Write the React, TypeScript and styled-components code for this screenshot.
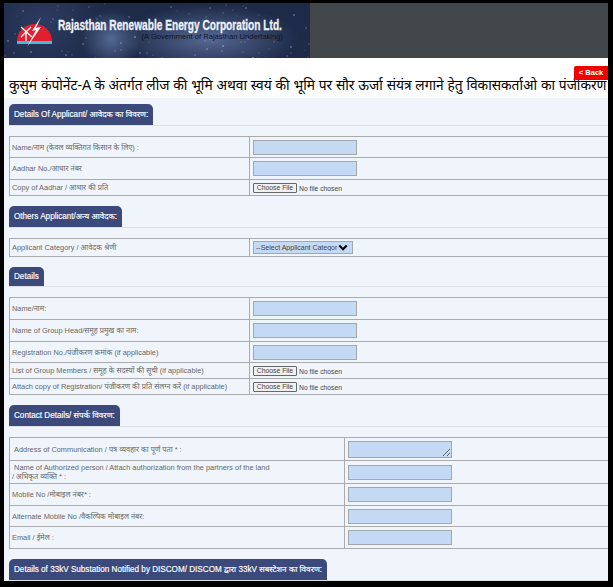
import React from 'react'
import styled, { createGlobalStyle } from 'styled-components'

const GlobalStyle = createGlobalStyle`
  html, body {
    margin: 0;
    padding: 0;
    height: 100%;
    background: #000;
    overflow: hidden;
  }
`

const seeded = (seed: number) => () => {
  seed = (seed * 16807) % 2147483647
  return seed / 2147483647
}

const rand = seeded(4211)
const stars = Array.from({ length: 110 }, () => {
  const x = Math.round(rand() * 306)
  const y = Math.round(rand() * 55)
  const r = (0.5 + rand() * 1).toFixed(1)
  const a = (0.2 + rand() * 0.45).toFixed(2)
  return `radial-gradient(circle ${r}px at ${x}px ${y}px, rgba(205,220,240,${a}), transparent)`
}).join(',')

const chevron =
  "data:image/svg+xml,%3Csvg xmlns='http://www.w3.org/2000/svg' viewBox='0 0 12 8'%3E%3Cpath d='M1.5 1.5L6 6l4.5-4.5' fill='none' stroke='%23000' stroke-width='2.6'/%3E%3C/svg%3E"

const Frame = styled.div`
  width: 604px;
  height: 578px;
  margin: 3px 0 0 4px;
  overflow: hidden;
  position: relative;
  background: #f0f5fc;
  font-family: 'Liberation Sans', Arial, 'Noto Sans', sans-serif;
`

const Header = styled.header`
  height: 55px;
  background: #41464b;
`

const Banner = styled.div`
  width: 306px;
  height: 55px;
  display: flex;
  align-items: flex-start;
  box-sizing: border-box;
  padding: 13px 0 0 11px;
  background: ${stars},
    radial-gradient(circle 30px at 107px 36px, rgba(120, 146, 200, 0.6), transparent),
    radial-gradient(ellipse 90px 34px at 205px 36px, rgba(96, 114, 160, 0.85), transparent),
    radial-gradient(circle 60px at 40px 20px, rgba(60, 76, 120, 0.5), transparent),
    #1d2a48;
`

const LogoMark = styled.svg`
  width: 40px;
  height: 32px;
  flex: none;
`

const BannerText = styled.div`
  width: 225px;
  margin-left: 3px;
  margin-top: 2px;
  display: flex;
  flex-direction: column;
  align-items: flex-end;
`

const BannerTitle = styled.div`
  width: 100%;
  color: #eef1f8;
  font-weight: 700;
  font-size: 14px;
  line-height: 14px;
  white-space: nowrap;
  transform: scaleX(0.725);
  transform-origin: left center;
  -webkit-text-stroke: 0.3px #eef1f8;
`

const BannerSub = styled.div`
  color: #10131f;
  font-size: 7.6px;
  line-height: 9px;
  margin-top: 0;
  white-space: nowrap;
`

const TitleBand = styled.div`
  height: 40px;
  background: #fff;
  padding: 15px 0 0 5px;
  box-sizing: border-box;
`

const PageTitle = styled.h1`
  margin: 0;
  font-size: 13.75px;
  line-height: 26px;
  font-weight: 400;
  color: #000;
  white-space: nowrap;
`

const BackButton = styled.a`
  position: absolute;
  top: 63px;
  right: 0;
  width: 34px;
  height: 14px;
  background: #f00000;
  color: #fff;
  font-size: 7.6px;
  font-weight: 700;
  line-height: 14px;
  text-align: center;
  border-radius: 2px 0 0 2px;
`

const Section = styled.section<{ $top?: number }>`
  padding: ${p => p.$top ?? 10}px 0 0 5px;
`

const TabLine = styled.div`
  border-bottom: 1px solid #dde1e6;
  margin-bottom: 10px;
`

const Tab = styled.h2<{ $h?: number }>`
  display: inline-block;
  vertical-align: bottom;
  margin: 0;
  padding: 0 5px;
  height: ${p => p.$h ?? 21}px;
  line-height: ${p => p.$h ?? 21}px;
  background: #3b4a7a;
  color: #fff;
  font-size: 8.15px;
  font-weight: 400;
  -webkit-text-stroke: 0.15px #fff;
  border-radius: 5px 5px 0 0;
  white-space: nowrap;
`

const FormTable = styled.table`
  width: 599px;
  table-layout: fixed;
  border-collapse: collapse;
  border: 1px solid #a9abad;
  border-right: 0;
`

const Row = styled.tr<{ $h: number }>`
  height: ${p => p.$h}px;
`

const LabelCell = styled.td<{ $w: number; $indent?: number }>`
  width: ${p => p.$w}px;
  border: 1px solid #a9abad;
  padding: 0 0 0 ${p => p.$indent ?? 2}px;
  font-size: 7.4px;
  line-height: 9px;
  color: #666;
`

const FieldCell = styled.td`
  border: 1px solid #a9abad;
  border-right: 0;
  padding: 0 0 0 3px;
  font-size: 0;
`

const TextBox = styled.input`
  display: block;
  width: 104px;
  height: 15px;
  box-sizing: border-box;
  padding: 0;
  background: #c4d9f3;
  border: 1px solid #a4a8ad;
`

const TextArea = styled.textarea`
  display: block;
  width: 104px;
  height: 17px;
  box-sizing: border-box;
  padding: 0;
  margin: 0;
  background: #c4d9f3;
  border: 1px solid #a4a8ad;
`

const FileBox = styled.input`
  display: block;
  width: 150px;
  height: 10px;
  font-size: 6.8px;
  line-height: 10px;
  font-family: 'Liberation Sans', sans-serif;
  color: #444;

  &::file-selector-button {
    font-size: 6.8px;
    width: 44px;
    height: 10px;
    padding: 0;
    margin-right: 2px;
    background: #f0f0f0;
    border: 1px solid #666;
    border-radius: 1px;
    color: #444;
    font-family: 'Liberation Sans', sans-serif;
  }
`

const SelectBox = styled.select`
  display: block;
  width: 100px;
  height: 13px;
  padding: 0 15px 0 2px;
  appearance: none;
  background: #c4d9f3 url("${chevron}") no-repeat right 4px center / 10px 7px;
  border: 1px solid #a4a8ad;
  font-size: 7px;
  font-family: 'Liberation Sans', sans-serif;
  color: #444;
`

const LogoIcon = () => (
  <LogoMark viewBox="0 0 40 32">
    <path d="M2 25a17.5 17 0 0 1 35 0z" fill="#e21f2e" />
    <rect x="2" y="25" width="35" height="3" fill="#4fb4d8" />
    <g stroke="#fff" strokeWidth="1.3" fill="none">
      <path d="M6 11l11 10M16 11L6 21M11 16v9" />
    </g>
    <path d="M26 1L17 15l4-1-9 17 14-20-5 1z" fill="#fff" />
  </LogoMark>
)

const Details = ({ rows, w }: { rows: [React.ReactNode, React.ReactNode, number, number?][]; w: number }) => (
  <FormTable>
    <tbody>
      {rows.map((r, i) => (
        <Row key={i} $h={r[2]}>
          <LabelCell $w={w} $indent={r[3]}>{r[0]}</LabelCell>
          <FieldCell>{r[1]}</FieldCell>
        </Row>
      ))}
    </tbody>
  </FormTable>
)

export default function App() {
  return (
    <>
      <GlobalStyle />
      <Frame>
        <Header>
          <Banner>
            <LogoIcon />
            <BannerText>
              <BannerTitle>Rajasthan Renewable Energy Corporation Ltd.</BannerTitle>
              <BannerSub>(A Government of Rajasthan Undertaking)</BannerSub>
            </BannerText>
          </Banner>
        </Header>
        <TitleBand>
          <PageTitle>कुसुम कंपोनेंट-A के अंतर्गत लीज की भूमि अथवा स्वयं की भूमि पर सौर ऊर्जा संयंत्र लगाने हेतु विकासकर्ताओ का पंजीकरण</PageTitle>
        </TitleBand>
        <BackButton>&lt; Back</BackButton>

        <Section $top={6}>
          <TabLine><Tab>Details Of Applicant/ आवेदक का विवरण:</Tab></TabLine>
          <Details
            w={237}
            rows={[
              ['Name/नाम (केवल व्यक्तिगत किसान के लिए) :', <TextBox />, 21],
              ['Aadhar No./आधार नंबर', <TextBox />, 22],
              ['Copy of Aadhar / आधार की प्रति', <FileBox type="file" />, 16],
            ]}
          />
        </Section>

        <Section>
          <TabLine><Tab>Others Applicant/अन्य आवेदक:</Tab></TabLine>
          <Details
            w={237}
            rows={[
              ['Applicant Category / आवेदक श्रेणी', <SelectBox><option>--Select Applicant Category--</option></SelectBox>, 18],
            ]}
          />
        </Section>

        <Section>
          <TabLine><Tab $h={19}>Details</Tab></TabLine>
          <Details
            w={237}
            rows={[
              ['Name/नाम:', <TextBox />, 22],
              ['Name of Group Head/समूह प्रमुख का नाम:', <TextBox />, 22],
              ['Registration No./पंजीकरण क्रमांक (if applicable)', <TextBox />, 21],
              ['List of Group Members / समूह के सदस्यों की सूची (if applicable)', <FileBox type="file" />, 16],
              ['Attach copy of Registration/ पंजीकरण की प्रति संलग्न करें (if applicable)', <FileBox type="file" />, 16],
            ]}
          />
        </Section>

        <Section>
          <TabLine><Tab>Contact Details/ संपर्क विवरण:</Tab></TabLine>
          <Details
            w={330}
            rows={[
              ['Address of Communication / पत्र व्यवहार का पूर्ण पता * :', <TextArea />, 23, 4],
              [<>&nbsp;Name of Authorized person / Attach authorization from the partners of the land<br />/ अधिकृत व्यक्ति * :</>, <TextBox />, 23],
              ['Mobile No /मोबाइल नंबर* :', <TextBox />, 22],
              ['Alternate Mobile No /वैकल्पिक मोबाइल नंबर:', <TextBox />, 21],
              ['Email / ईमेल :', <TextBox />, 22],
            ]}
          />
        </Section>

        <Section>
          <TabLine><Tab>Details of 33kV Substation Notified by DISCOM/ DISCOM द्वारा 33kV सबस्टेशन का विवरण:</Tab></TabLine>
        </Section>
      </Frame>
    </>
  )
}
